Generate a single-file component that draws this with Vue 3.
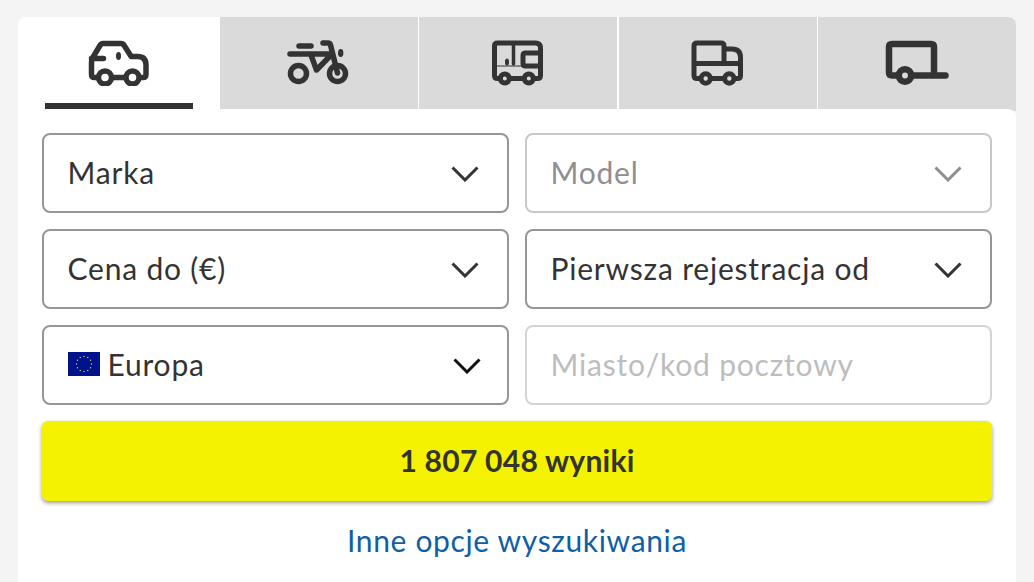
<script setup>
const tabs = ['car', 'bike', 'camper', 'truck', 'trailer']

// twelve stars round the flag centre
const stars = Array.from({ length: 12 }, (_, i) => {
  const a = (i * Math.PI) / 6
  return { x: 16 + Math.cos(a) * 7.5, y: 12 + Math.sin(a) * 7.5 }
})
</script>

<template>
  <div class="page">
    <div class="card">
      <!-- Vehicle tabs -->
      <div class="tabs">
        <div v-for="tab in tabs" :key="tab" class="tab" :class="{ active: tab === 'car' }">
          <svg v-if="tab === 'car'" class="icon" viewBox="87 38 64 48">
            <path d="M96 77.500h-1.500q-3 0-3-3V62q0-2.500 1.300-4.500L100 45.500q1-2 3-2h18q2 0 3.200 2l7 11h6.300q8.500 0 8.500 8.500v9.500q0 3-3 3H142M114 77.500h9.500M91.500 58.500h12" />
            <circle cx="105" cy="77.500" r="6.500" />
            <circle cx="132.500" cy="77.500" r="6.500" />
            <ellipse class="fill" cx="118.500" cy="56" rx="2.500" ry="4" />
          </svg>
          <svg v-else-if="tab === 'bike'" class="icon" viewBox="287 38 64 48">
            <circle cx="298.500" cy="73.500" r="8" />
            <circle cx="337.500" cy="73.500" r="8" />
            <path d="M299 46h12M290 54h41M311 55l5.500 15L331 55M323 43h5q2 0 2.500 2l7 28" />
            <ellipse class="fill" cx="340.700" cy="53" rx="2.700" ry="4" />
          </svg>
          <svg v-else-if="tab === 'camper'" class="icon thin" viewBox="486.500 38 64 48">
            <path d="M500.500 78.500H498q-3 0-3-3V46q0-3 3-3h38q5 0 5 5v27.500q0 3-3 3h-3M511 78.500h13M541 53h-15q-2.500 0-2.500 2.500v8q0 2.500 2.500 2.500h15" />
            <circle cx="505.300" cy="78.500" r="4.500" />
            <circle cx="529.300" cy="78.500" r="4.500" />
            <path class="pole" d="M514 43v21" />
            <path class="hair" d="M495 66h28" />
            <ellipse class="fill" cx="507.500" cy="62" rx="2" ry="3.500" />
          </svg>
          <svg v-else-if="tab === 'truck'" class="icon thin" viewBox="686 38 64 48">
            <path d="M700.500 78.500H697q-3 0-3-3V46q0-3 3-3h24q3 0 3 3v3h8q8.500 0 8.500 8.500v18q0 3-3 3h-1M711 78.500h13M694 63.500h46.500M724 47v16" />
            <circle cx="705.700" cy="78.500" r="4.700" />
            <circle cx="729.300" cy="78.500" r="4.700" />
          </svg>
          <svg v-else class="icon wide" viewBox="885 38 64 48">
            <path d="M896 75.500h-4q-3 0-3-3V47q0-3 3-3h39q3 0 3 3v28.500M914 75.500h31.500" />
            <circle cx="905" cy="75.500" r="6.200" />
          </svg>
          <span v-if="tab === 'car'" class="underline"></span>
        </div>
      </div>

      <div class="panel">
        <div class="fields">
          <div class="field">
            <span>Marka</span>
            <svg class="chevron" viewBox="0 0 28 16"><path d="M1.500 1.500 14 14 26.500 1.500" /></svg>
          </div>
          <div class="field disabled">
            <span>Model</span>
            <svg class="chevron" viewBox="0 0 28 16"><path d="M1.500 1.500 14 14 26.500 1.500" /></svg>
          </div>
          <div class="field">
            <span>Cena do (€)</span>
            <svg class="chevron" viewBox="0 0 28 16"><path d="M1.500 1.500 14 14 26.500 1.500" /></svg>
          </div>
          <div class="field">
            <span>Pierwsza rejestracja od</span>
            <svg class="chevron" viewBox="0 0 28 16"><path d="M1.500 1.500 14 14 26.500 1.500" /></svg>
          </div>
          <div class="field">
            <span class="country">
              <svg class="flag" viewBox="0 0 32 24">
                <rect width="32" height="24" fill="#00138c" />
                <circle v-for="(s, i) in stars" :key="i" :cx="s.x" :cy="s.y" r="0.700" fill="#d8d04a" />
              </svg>
              Europa
            </span>
            <svg class="chevron black" viewBox="0 0 28 16"><path d="M1.500 1.500 14 14 26.500 1.500" /></svg>
          </div>
          <div class="field input">
            <span>Miasto/kod pocztowy</span>
          </div>
        </div>

        <button class="results">1 807 048 wyniki</button>
        <a class="more" href="#">Inne opcje wyszukiwania</a>
      </div>
    </div>
  </div>
</template>

<style>
html,
body {
  margin: 0;
  background: #f4f4f4;
  overflow: hidden;
}
</style>

<style scoped>
.page {
  height: 582px;
  padding: 17px 18px 0;
  box-sizing: border-box;
  font-family: Lato, 'Open Sans', sans-serif;
  color: #333;
  overflow: hidden;
}

.card {
  width: 998px;
}

.tabs {
  display: flex;
  margin-bottom: -2px;
  background: #fff;
  border-radius: 8px 8px 0 0;
}

.tab {
  flex: 1;
  height: 94px;
  box-sizing: border-box;
  padding-top: 21px;
  display: flex;
  flex-direction: column;
  align-items: center;
  background: #dadada;
  margin-left: 1.5px;
}

.tab.active {
  flex: 0 0 202px;
  margin-left: 0;
  background: #fff;
  border-top-left-radius: 8px;
}

.tab.active + .tab {
  margin-left: 0;
}

.tab:last-child {
  border-top-right-radius: 8px;
}

.icon {
  width: 64px;
  height: 48px;
  fill: none;
  stroke: #333;
  stroke-width: 5.500;
  stroke-linecap: round;
  stroke-linejoin: round;
}

.icon.thin {
  stroke-width: 5;
}

.icon.wide {
  stroke-width: 6.500;
}

.icon .fill {
  fill: #333;
  stroke: none;
}

.icon .pole {
  stroke-width: 3.500;
}

.icon .hair {
  stroke-width: 1.200;
}

.underline {
  width: 148px;
  height: 6px;
  margin-top: 17px;
  background: #333;
}

.panel {
  position: relative;
  height: 473px;
  box-sizing: border-box;
  padding: 24px;
  background: #fff;
  border-top-right-radius: 8px;
}

.fields {
  display: grid;
  grid-template-columns: 1fr 1fr;
  gap: 16px;
}

.field {
  height: 80px;
  box-sizing: border-box;
  padding: 0 28px 2px 23.500px;
  display: flex;
  align-items: center;
  justify-content: space-between;
  border: 2px solid #969696;
  border-radius: 8px;
  font-size: 30px;
  letter-spacing: 0.8px;
  background: #fff;
}

.field.disabled {
  border-color: #c8c8c8;
  color: #8f8f8f;
}

.field.input {
  border-color: #d4d4d4;
  color: #bdbdbd;
}

.country {
  display: flex;
  align-items: center;
  gap: 8px;
}

.flag {
  width: 32px;
  height: 24px;
}

.chevron {
  width: 28px;
  height: 16px;
  margin-top: 4px;
  fill: none;
  stroke: #333;
  stroke-width: 3;
}

.field.disabled .chevron {
  stroke: #8f8f8f;
}

.chevron.black {
  stroke: #111;
  margin-right: -2px;
}

.results {
  display: block;
  width: 100%;
  height: 80px;
  margin-top: 16px;
  padding: 0 0 2px;
  border: none;
  border-radius: 6px;
  background: #f5f200;
  box-shadow: 0 2px 4px rgba(0, 0, 0, 0.4);
  font-family: inherit;
  font-size: 30px;
  font-weight: 700;
  letter-spacing: 0.25px;
  color: #333;
}

.more {
  display: block;
  margin-top: 20px;
  text-align: center;
  font-size: 30px;
  line-height: 38px;
  letter-spacing: 0.65px;
  color: #0f5fa6;
  text-decoration: none;
}
</style>
